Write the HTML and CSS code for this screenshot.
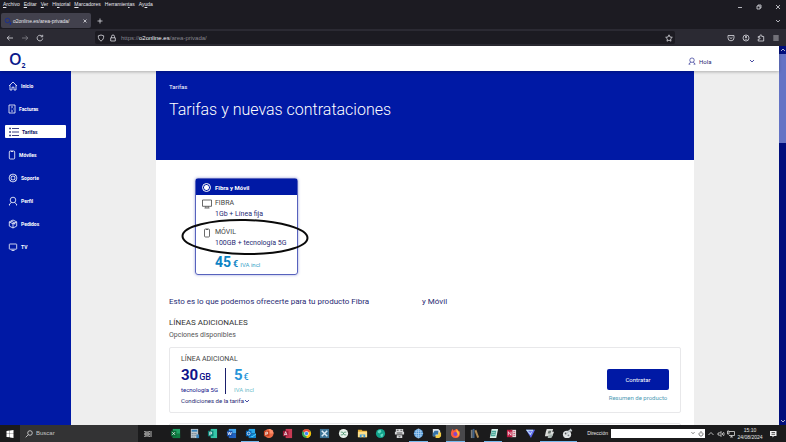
FILE: index.html
```html
<!DOCTYPE html>
<html lang="es">
<head>
<meta charset="utf-8">
<title>Tarifas y nuevas contrataciones</title>
<link rel="stylesheet" href="styles.css">
</head>
<body>
<header class="browser">
  <div class="menubar">
    <nav class="menus"><button><u>A</u>rchivo</button><button><u>E</u>ditar</button><button><u>V</u>er</button><button>Hi<u>s</u>torial</button><button><u>M</u>arcadores</button><button>Herramien<u>t</u>as</button><button>Ay<u>u</u>da</button></nav>
    <div class="window-buttons">
      <button aria-label="Minimizar"><svg viewBox="0 0 8 8"><path d="M2 4.500h4"/></svg></button>
      <button aria-label="Restaurar"><svg viewBox="0 0 8 8"><path d="M2 3h3v3H2zM3 3V2h3v3H5"/></svg></button>
      <button aria-label="Cerrar"><svg viewBox="0 0 8 8"><path d="M2 2l4 4M6 2L2 6"/></svg></button>
    </div>
  </div>
  <div class="tabbar">
    <div class="tab">
      <svg class="tab-logo" viewBox="0 0 8 8"><circle cx="3.500" cy="3.500" r="2.300"/><path d="M6 5.500h1v1H6v1h1"/></svg>
      <span>o2online.es/area-privada/</span>
      <button aria-label="Cerrar pestaña"><svg viewBox="0 0 8 8"><path d="M2.500 2.500l3 3M5.500 2.500l-3 3"/></svg></button>
    </div>
    <button class="new-tab" aria-label="Nueva pestaña"><svg viewBox="0 0 8 8"><path d="M4 1.500v5M1.500 4h5"/></svg></button>
    <button class="all-tabs" aria-label="Todas las pestañas"><svg viewBox="0 0 8 8"><path d="M2 3l2 2 2-2"/></svg></button>
  </div>
  <div class="navbar">
    <div class="nav-buttons">
      <button aria-label="Atrás"><svg viewBox="0 0 8 8"><path d="M7 4H1.200M3.500 1.700L1.200 4l2.300 2.300"/></svg></button>
      <button aria-label="Adelante" class="dim"><svg viewBox="0 0 8 8"><path d="M1 4h5.800M4.500 1.700L6.800 4 4.500 6.300"/></svg></button>
      <button aria-label="Recargar"><svg viewBox="0 0 8 8"><path d="M6.700 4.500A2.800 2.800 0 1 1 6 2.200M6.700 .8v2H4.700"/></svg></button>
    </div>
    <div class="address">
      <svg viewBox="0 0 8 8"><path d="M4 1l2.700.8c0 2.500-.7 4.200-2.700 5.300C2 6 1.300 4.300 1.300 1.800z"/></svg>
      <svg viewBox="0 0 8 8"><path d="M1.700 3.800h4.600v3.200H1.700zM2.500 3.800V2.500a1.500 1.500 0 0 1 3 0v1.300"/></svg>
      <span class="url">https://<b>o2online.es</b>/area-privada/</span>
      <svg viewBox="0 0 8 8"><path d="M4 .8l1 2.200 2.300.3-1.700 1.600.4 2.300-2-1.100-2 1.100.4-2.300L.7 3.300 3 3z"/></svg>
    </div>
    <div class="tools">
      <button aria-label="Pocket"><svg viewBox="0 0 8 8"><path d="M1 1.500h6v2.300a3 3 0 0 1-6 0zM2.500 3.200L4 4.600l1.500-1.400"/></svg></button>
      <button aria-label="Cuenta"><svg viewBox="0 0 8 8"><circle cx="4" cy="4" r="3"/><circle class="solid" cx="4" cy="3" r="1"/><path class="solid" d="M2.300 5.500a1.800 1.300 0 0 1 3.400 0z"/></svg></button>
      <button aria-label="Extensiones"><svg viewBox="0 0 8 8"><path d="M1.200 7V5.200h1a.7.700 0 0 0 0-1.600h-1V2.500H3V1.700a.9.900 0 0 1 1.800 0v.8h1.900V7z"/></svg></button>
      <button aria-label="Menú"><svg viewBox="0 0 8 8"><path d="M1.300 2h5.400M1.300 4h5.400M1.300 6h5.400"/></svg></button>
    </div>
  </div>
</header>

<div class="viewport">
  <div class="site">
    <header class="site-header">
      <a class="logo" href="#" aria-label="O2">O<sub>2</sub></a>
      <button class="account">
        <svg class="line-icon" viewBox="0 0 10 10"><circle cx="5" cy="4" r="2.800"/><path d="M1 9l2.400-2.800M9 9L6.600 6.200M1 9h2M7 9h2"/></svg>
        <span>Hola</span>
        <svg class="line-icon arrow" viewBox="0 0 6 6"><path d="M1 2l2 2 2-2"/></svg>
      </button>
    </header>
    <div class="site-body">
      <nav class="sidebar">
        <a href="#"><svg viewBox="0 0 10 10"><path d="M1 5l4-4 4 4M2 4.200V9h2V6.200h2V9h2V4.200"/></svg>Inicio</a>
        <a href="#" class="narrow"><svg viewBox="0 0 10 10"><path d="M2 1h6v8H2zM4 3h2M4 5h.5M6 5h.5M4 7h2"/></svg>Facturas</a>
        <a href="#" class="active"><svg viewBox="0 0 10 10"><path d="M3 1.500h7M3 5h7M3 8.500h7"/><path class="bullets" d="M.3 1.500h1.500M.3 5h1.500M.3 8.500h1.500"/></svg>Tarifas</a>
        <a href="#" class="narrow"><svg viewBox="0 0 10 10"><rect x="2.300" y="1" width="5.400" height="8" rx="1"/><path d="M4 1.500h2"/></svg>Móviles</a>
        <a href="#"><svg viewBox="0 0 10 10"><circle cx="5" cy="5" r="3.900"/><circle cx="5" cy="5" r="2"/><path d="M2.200 2.200l1.300 1.300M7.800 2.200L6.500 3.500M2.200 7.800l1.300-1.300M7.800 7.800L6.500 6.500"/></svg>Soporte</a>
        <a href="#"><svg viewBox="0 0 10 10"><circle cx="5" cy="4" r="2.800"/><path d="M1 9l2.400-2.800M9 9L6.600 6.200M1 9h1M8 9h1"/></svg>Perfil</a>
        <a href="#"><svg viewBox="0 0 10 10"><path d="M5 1l3.700 1.900v4.200L5 9 1.300 7.100V2.900zM1.300 2.900L5 4.800l3.700-1.900M5 4.800V9M3 2l3.800 2v1.500"/></svg>Pedidos</a>
        <a href="#"><svg viewBox="0 0 10 10"><rect x="1.300" y="2" width="7.400" height="5.200" rx=".6"/><path d="M3.500 8.500h3"/></svg>TV</a>
      </nav>
      <main class="content">
        <section class="banner">
          <p>Tarifas</p>
          <h1>Tarifas y nuevas contrataciones</h1>
        </section>
        <section class="current">
          <article class="plan">
            <label class="plan-title"><input type="radio" name="plan" checked>Fibra y Móvil</label>
            <dl>
              <dt><svg viewBox="0 0 10 10"><path d="M.5 1h9v6.300h-9zM3.800 7.300v1.500M6.200 7.300v1.500M2.500 9h5"/></svg>FIBRA</dt>
              <dd>1Gb + Línea fija</dd>
              <dt class="second"><svg viewBox="0 0 10 10"><rect x="2.500" y="1" width="5" height="8" rx="1"/><path d="M4 1.500h2"/></svg>MÓVIL</dt>
              <dd>100GB + tecnología 5G</dd>
            </dl>
            <p class="plan-price"><b>45</b><strong>€</strong><small>IVA incl</small></p>
            <svg class="marker" viewBox="0 0 130 38"><ellipse cx="65" cy="19" rx="62.500" ry="17" transform="rotate(1 65 19)"/></svg>
          </article>
        </section>
        <section class="offers">
          <h2><span>Esto es lo que podemos ofrecerte para tu producto Fibra</span><span>y Móvil</span></h2>
          <h3>LÍNEAS ADICIONALES</h3>
          <p class="hint">Opciones disponibles</p>
          <article class="offer">
            <div class="offer-info">
              <h4>LÍNEA ADICIONAL</h4>
              <div class="figures">
                <p class="data"><span><b>30</b><strong>GB</strong></span><small>tecnología 5G</small></p>
                <p class="price"><span><b>5</b><strong>€</strong></span><small>IVA incl</small></p>
              </div>
              <button class="conditions">Condiciones de la tarifa<svg class="line-icon" viewBox="0 0 6 6"><path d="M1 2l2 2 2-2"/></svg></button>
            </div>
            <div class="offer-actions">
              <button class="hire">Contratar</button>
              <a href="#">Resumen de producto</a>
            </div>
          </article>
          <article class="offer next"></article>
        </section>
      </main>
    </div>
  </div>
  <div class="scrollbar">
    <svg viewBox="0 0 8 8"><path d="M2 5l2-2 2 2"/></svg>
    <div class="thumb"></div>
    <svg class="down" viewBox="0 0 8 8"><path d="M2 3l2 2 2-2"/></svg>
  </div>
</div>

<footer class="taskbar">
  <button class="start" aria-label="Inicio"><svg viewBox="0 0 8 8"><path fill="#fff" d="M.5 1l3.200-.4v3.200H.5zM4 .6L7.500 0v3.800H4zM.5 4.100h3.200v3.200L.5 6.900zM4 4.100h3.500V8L4 7.400z"/></svg></button>
  <label class="search"><svg viewBox="0 0 8 8"><circle cx="5" cy="3" r="2.300"/><path d="M3.300 4.700L.7 7.300"/></svg><input type="text" placeholder="Buscar" aria-label="Buscar"></label>
  <button class="task-view" aria-label="Vista de tareas"><svg viewBox="0 0 8 8"><path d="M.8 1v1h4.500V1M.8 7V6h4.500v1M.8 3.200h4.500v1.600H.8zM7 1v6"/></svg></button>
  <div class="apps">
    <button aria-label="Excel"><svg viewBox="0 0 12 12"><path fill="#21a366" d="M3 1h8v10H3z"/><path fill="#107c41" d="M7 6h4v5H3V8z"/><path fill="#0b6b37" d="M1 3h6v6H1z"/><path stroke="#fff" d="M2.500 4.500l3 3M5.500 4.500l-3 3"/></svg></button>
    <button aria-label="Calculadora"><svg viewBox="0 0 12 12"><path fill="#b9c4cb" d="M2 1h8v10H2z"/><path fill="#3684bd" d="M3 2h6v2H3z"/><path stroke="#456" stroke-dasharray="1 1" d="M3 6h6M3 8h6M3 10h4"/><path fill="#3684bd" d="M8 7h3v4H8z"/></svg></button>
    <button aria-label="Publisher"><svg viewBox="0 0 12 12"><path fill="#36c5a8" d="M4 1h7v10H4z"/><path fill="#0b8074" d="M1 3h6v6H1z"/><path stroke="#fff" fill="none" d="M3 8V4.500h2v2H3"/></svg></button>
    <button aria-label="Word"><svg viewBox="0 0 12 12"><path fill="#41a5ee" d="M3 1h8v5H3z"/><path fill="#2262c2" d="M3 6h8v5H3z"/><path fill="#174da8" d="M1 3h6v6H1z"/><path stroke="#fff" fill="none" stroke-width=".8" d="M2 4.500l1 3 1-3 1 3 1-3"/></svg></button>
    <button class="open" aria-label="Outlook"><svg viewBox="0 0 12 12"><path fill="#28a8ea" d="M4 1h7v5H4z"/><path fill="#1483cf" d="M4 6h8v5H4z"/><path fill="#50d9ff" d="M4 7l4 2 4-3v1L8 10 4 8z"/><path fill="#0364b8" d="M1 3h6v6H1z"/><circle cx="4" cy="6" r="1.600" fill="none" stroke="#fff"/></svg></button>
    <button aria-label="PowerPoint"><svg viewBox="0 0 12 12"><circle cx="6.500" cy="6" r="5" fill="#ed6c47"/><path fill="#ff8f6b" d="M6.500 1a5 5 0 0 1 5 5h-5z"/><path fill="#c43e1c" d="M1 3h6v6H1z"/><path stroke="#fff" fill="none" d="M3 8V4.500h2v2H3"/></svg></button>
    <button aria-label="Access"><svg viewBox="0 0 12 12"><path fill="#c73a54" d="M4 1h7v10H4z"/><path fill="#9a1633" d="M1 3h6v6H1z"/><path stroke="#fff" fill="none" stroke-width=".8" d="M2.500 8L4 4l1.500 4M3 7h2"/></svg></button>
    <button aria-label="Chrome"><svg viewBox="0 0 12 12"><circle cx="6" cy="6" r="5" fill="#34a853"/><path fill="#ea4335" d="M1.700 3.500a5 5 0 0 1 8.600 0L6 6z"/><path fill="#fbbc05" d="M10.300 3.500A5 5 0 0 1 6 11l0-5z"/><circle cx="6" cy="6" r="2.500" fill="#fff"/><circle cx="6" cy="6" r="1.900" fill="#4285f4"/></svg></button>
    <button aria-label="Herramientas"><svg viewBox="0 0 12 12"><path fill="#3d7396" d="M1 1h10v10H1z"/><path stroke="#dcebf5" stroke-width="1.600" d="M3 3l6 6M9 3L3 9"/></svg></button>
    <button aria-label="Utilidad"><svg viewBox="0 0 12 12"><circle cx="6" cy="6" r="5" fill="#e9f2ec"/><path stroke="#34865d" fill="none" d="M3 4.500h2l2 3h2M3 7.500h2l2-3h2"/></svg></button>
    <button aria-label="Archivos"><svg viewBox="0 0 12 12"><path fill="#e6ac32" d="M1 2h4l1 1h5v7H1z"/><path fill="#ffe08a" d="M1 4h10v6H1z"/><path fill="#3e9bdc" d="M3 7h6v3H7V8H5v2H3z"/></svg></button>
    <button aria-label="Agente"><svg viewBox="0 0 12 12"><circle cx="6" cy="6" r="5" fill="#12a38c"/><path fill="#65dbc4" d="M3 3l3-1 1 2-2 2-2-1zM6 7l3-1-1 4-2-1z"/></svg></button>
    <button aria-label="Impresora"><svg viewBox="0 0 12 12"><path fill="#d5d7d9" d="M2 1h8v3H2zM1 4h10v3H1zM3 8h6v3H3z"/><path fill="#555" d="M3 2h2v1H3zM7 2h2v1H7zM3 5h6v1H3zM5 9h2v1H5z"/></svg></button>
    <button class="open" aria-label="Navegador"><svg viewBox="0 0 12 12"><circle cx="6" cy="6" r="5" fill="#4f96d5"/><path stroke="#b9daf5" fill="none" stroke-width=".7" d="M6 1v10M1 6h10M2 3.500h8M2 8.500h8"/><ellipse cx="6" cy="6" rx="2.500" ry="5" fill="none" stroke="#b9daf5" stroke-width=".7"/></svg></button>
    <button aria-label="Python"><svg viewBox="0 0 12 12"><path fill="#dce2e6" d="M2 1h6l2 2v6H2z"/><path fill="#3572a5" d="M4 3h4v4H5v2H2V6z"/><path fill="#f2cc43" d="M8 5h3v4L9 11H5V8h3z"/></svg></button>
    <button class="open current-app" aria-label="Firefox"><svg viewBox="0 0 12 12"><path fill="#ff5a3c" d="M1 6c0-2 1-4 2-5l1 2c2-2 3-2 4-2 0 1 1 1 2 3l.5-1C12 9 9 11 6 11S1 9 1 6z"/><path fill="#ffbd35" d="M7 1c1 2 3 2 3 5 0 2-1 4-4 4 3-1 3-3 1-5z"/><circle cx="5.800" cy="6.500" r="2.200" fill="#8746c9"/></svg></button>
    <button aria-label="Biblioteca"><svg viewBox="0 0 12 12"><path fill="#7c7e80" d="M2 2h2v9H2z"/><path fill="#3f6189" d="M4 1h2v10H4z"/><path fill="#b18c55" d="M6 3l2-1 3 8-2 1z"/></svg></button>
    <button class="open" aria-label="Notas"><svg viewBox="0 0 12 12"><path fill="#d9f0ea" d="M4 1h7L9 11H2z"/><path fill="#48a899" d="M4 3h5L8 9H3z"/><path stroke="#d9f0ea" stroke-width=".6" d="M4 5h4M4 7h4"/></svg></button>
    <button aria-label="Lector"><svg viewBox="0 0 12 12"><path fill="#e7d9dc" d="M5 2h6v8H5z"/><path fill="#bb1940" d="M1 2h6v8H1z"/><path stroke="#fff" fill="none" d="M2.500 8V4l3 4V4"/><path stroke="#bb1940" stroke-width=".7" d="M8 4h2M8 6h2M8 8h2"/></svg></button>
    <button aria-label="VPN"><svg viewBox="0 0 12 12"><path fill="#5c67ee" d="M1 2h10L6.500 11z"/><path fill="#c4eaf5" d="M1 2h8L6 8z"/><path fill="#7776f5" d="M3 3h5L6 6z"/></svg></button>
    <button class="open" aria-label="Fax"><svg viewBox="0 0 12 12"><path fill="#dadcda" d="M3 1h7l-1 3h2L9 9H1l1-5z"/><path fill="#65706b" d="M5 3h3L7 6H4z"/><path fill="#a8b5af" d="M5 7h5l-2 4H4z"/></svg></button>
    <button class="open" aria-label="Pintura"><svg viewBox="0 0 12 12"><ellipse cx="5.500" cy="7" rx="4.500" ry="4" fill="#dfe2e3"/><circle cx="4" cy="6" r="1" fill="#505456"/><circle cx="7" cy="8" r="1" fill="#7b8388"/><path stroke="#bfc5c8" stroke-width="1.500" d="M5 6l5-5M7 3h4"/></svg></button>
  </div>
  <div class="direction">
    <label for="direction">Dirección</label>
    <div class="direction-box">
      <select id="direction"><option></option></select>
      <svg viewBox="0 0 8 8"><path d="M2.500 3.200L4 4.700l1.500-1.500"/></svg>
    </div>
  </div>
  <button class="go" aria-label="Actualizar"><svg viewBox="0 0 8 8"><path d="M5.200 2.500A2 2 0 1 1 2.800 2.500M4 1v2.500"/></svg></button>
  <div class="tray">
    <svg viewBox="0 0 8 8"><path d="M1.500 5L4 2.500 6.500 5"/></svg>
    <svg viewBox="0 0 8 8"><path d="M1 3h1.500L4 1.500v5L2.500 5H1zM5.300 3q.7 1 0 2M6.500 2q1.300 2 0 4"/></svg>
    <svg viewBox="0 0 8 8"><path d="M2 1.500h5.500v4H2M4.500 5.500V7M3 7h3M.5 1h1.500v3H.5z"/></svg>
  </div>
  <div class="clock"><time>15:10</time><time>24/08/2024</time></div>
  <button class="notices" aria-label="Notificaciones"><svg viewBox="0 0 8 8"><path fill="#eee" d="M1 1h6.500v5H5L3.500 7.500V6H1z"/><path d="M2.500 2.500h3.500M2.500 4.300h3.500" stroke="#333"/></svg></button>
</footer>
</body>
</html>
```
FILE: styles.css
```css
* { box-sizing: border-box; }
html, body { height: 100%; }
body {
  margin: 0;
  display: flex;
  flex-direction: column;
  overflow: hidden;
  font-family: Roboto, "Liberation Sans", sans-serif;
  color: #1f2a73;
}
h1, h2, h3, h4, p, dl, dd { margin: 0; font-weight: 400; }
button { margin: 0; padding: 0; border: 0; background: none; color: inherit; font: inherit; }
a { color: inherit; text-decoration: none; }
svg { display: block; flex: none; width: 8px; height: 8px; }

/* Browser window */
.browser { flex: none; background: #1c1b22; color: #e8e8ee; font: 5px/8px "Liberation Sans", sans-serif; }
.browser svg, .scrollbar svg { fill: none; stroke: #dcdce2; stroke-width: 0.8; }
.browser .solid { fill: #dcdce2; stroke: none; }
.menubar { display: flex; justify-content: space-between; height: 12px; }
.menus { display: flex; align-items: flex-start; gap: 4px; padding-left: 3px; }
.menus button { height: 8px; }
.window-buttons { display: flex; gap: 11px; padding: 2px 4px 0 0; }
.tabbar { display: flex; align-items: center; height: 17px; padding: 0 4px 0 1px; }
.tab { display: flex; align-items: center; gap: 1px; width: 90px; height: 15px; padding: 0 2px 0 3px; border-radius: 2px; background: #42414d; }
.tab span { flex: 1; white-space: nowrap; }
.browser .tab-logo { stroke: #1b2f8e; stroke-width: 1; }
.new-tab { margin-left: 5px; }
.all-tabs { margin-left: auto; }
.navbar { display: flex; align-items: center; height: 17px; padding: 0 6px; background: #2b2a33; }
.nav-buttons { display: flex; gap: 7px; width: 89px; }
.dim { opacity: 0.5; }
.address { flex: 1; display: flex; align-items: center; gap: 4px; height: 13px; padding: 0 2px; border-radius: 2px; background: #1c1b22; }
.url { flex: 1; color: #85848e; font-size: 6px; }
.url b { color: #f4f4f8; font-weight: 400; }
.tools { display: flex; gap: 7px; padding-left: 52px; }

/* Site */
.viewport { flex: 1; min-height: 0; display: flex; }
.site { flex: 1; min-width: 0; display: flex; flex-direction: column; }
.site-header { position: relative; flex: none; display: flex; align-items: center; justify-content: space-between; height: 25px; padding: 0 24px 0 9px; background: #fff; box-shadow: 0 1px 3px #0004; }
.logo { color: #0b1a8c; font: 600 16px/20px "Open Sans", sans-serif; }
.logo sub { font-size: 7px; line-height: 7px; font-weight: 700; vertical-align: -3px; }
.line-icon { fill: none; stroke: #1a1f8b; stroke-width: 0.8; }
.account { display: flex; align-items: center; gap: 3px; width: 67px; margin-top: 5px; font-size: 6px; }
.arrow { width: 6px; height: 6px; margin-left: auto; }
.site-body { flex: 1; min-height: 0; display: flex; background: #eee; }
.sidebar { flex: none; display: flex; flex-direction: column; gap: 10px; width: 71px; padding: 8px 5px; background: #0019a5; color: #fff; font-size: 5px; font-weight: 700; }
.sidebar a { display: flex; align-items: center; gap: 3px; height: 13px; padding-left: 3px; border-radius: 1px; }
.sidebar svg { width: 10px; height: 10px; fill: none; stroke: currentColor; stroke-width: 0.8; }
.sidebar .narrow { gap: 2px; padding-left: 2px; }
.sidebar .active { background: #fff; color: #0b1263; padding-left: 4px; }
.sidebar .bullets { stroke-width: 1.5; }
.content { flex: 1; min-width: 0; margin: 0 85px; overflow: hidden; background: #fff; }
.banner { height: 89px; padding: 11px 13px; background: #0019a5; color: #fff; }
.banner p { font-size: 6px; line-height: 9px; }
.banner h1 { padding-top: 9px; font-size: 16px; line-height: 20px; font-weight: 300; }
.current { padding: 18px 39px 0; }
.plan { position: relative; width: 103px; height: 97px; border: 1px solid #5762bd; border-radius: 3px; box-shadow: 0 0 3px #0019a566; }
.plan-title { display: flex; align-items: center; gap: 4px; height: 16px; padding-left: 6px; background: #0019a5; color: #fff; font-size: 6px; font-weight: 700; }
.plan-title input { appearance: none; width: 9px; height: 9px; margin: 0; border: 1px solid #fff; border-radius: 50%; background: radial-gradient(#fff 0 2px, transparent 3px); }
.plan dt { display: flex; align-items: center; gap: 3px; padding: 3px 0 0 6px; color: #444; font-size: 7px; line-height: 11px; }
.plan dt svg { width: 10px; height: 10px; fill: none; stroke: #444; stroke-width: 0.8; }
.plan dd { padding-left: 19px; font-size: 7px; line-height: 11px; white-space: nowrap; }
.plan .second { padding-top: 7px; }
.plan-price { display: flex; align-items: baseline; gap: 2px; padding: 5px 0 0 19px; color: #0d83c4; line-height: 16px; }
.plan-price b { font-size: 14px; }
.plan-price strong { font-size: 9px; }
.plan-price small { color: #36a3c9; font-size: 6px; }
/* Hand-drawn ring over the mobile line */
.marker { position: absolute; left: -16px; top: 39px; width: 130px; height: 38px; fill: none; stroke: #0a0a0a; stroke-width: 2; }
.offers { padding: 21px 13px 0; }
.offers h2 { display: flex; gap: 53px; font-size: 8px; line-height: 12px; }
.offers h3 { padding-top: 9px; color: #333; font-size: 8px; line-height: 12px; }
.hint { color: #555; font-size: 7px; line-height: 13px; }
.offer { display: flex; justify-content: space-between; height: 66px; margin-top: 5px; padding: 7px 11px; border: 1px solid #e8e8ea; border-radius: 2px; }
.offer.next { margin-top: 10px; }
.offer h4 { color: #444; font-size: 7px; line-height: 9px; }
.figures { display: flex; padding-top: 4px; }
.figures p { display: flex; flex-direction: column; }
.figures span { display: flex; align-items: baseline; gap: 1px; line-height: 15px; }
.figures b { font-size: 15px; }
.figures strong { font-size: 9px; font-weight: 500; }
.figures small { font-size: 6px; line-height: 9px; }
.data { width: 44px; color: #0f138a; }
.price { padding-left: 8px; border-left: 1px solid #1a1f6b; color: #2795d9; }
.price small { color: #6bbdca; }
.conditions { display: flex; align-items: center; padding-top: 2px; font-size: 6px; line-height: 9px; }
.conditions svg { width: 6px; height: 6px; }
.offer-actions { display: flex; flex-direction: column; align-items: center; padding-top: 14px; }
.hire { width: 62px; height: 21px; border-radius: 2px; background: #0019a5; color: #fff; font-size: 6px; }
.offer-actions a { padding-top: 3px; color: #4f9bb5; font-size: 6px; line-height: 9px; }
.scrollbar { flex: none; display: flex; flex-direction: column; align-items: center; width: 7px; background: #000e7c; }
.thumb { width: 7px; height: 89px; background: #6473c5; }
.scrollbar .down { margin-top: auto; }

/* Taskbar */
.taskbar { flex: none; display: flex; align-items: center; height: 17px; background: #1b1b1c; color: #e5e5e5; font: 5px/7px "Liberation Sans", sans-serif; }
.taskbar svg { stroke-width: 0.8; }
.start { width: 20px; padding-left: 6px; }
.search { display: flex; align-items: center; gap: 3px; width: 118px; height: 17px; padding-left: 5px; background: #333334; }
.search svg, .task-view svg, .tray svg { fill: none; stroke: #ddd; }
.search input { width: 80px; padding: 0; border: 0; background: none; color: #ccc; font: 6px/9px "Liberation Sans", sans-serif; }
.search input::placeholder { color: #c4c4c4; }
.task-view { width: 28px; padding-left: 6px; }
.apps { flex: 1; display: grid; grid-template-columns: repeat(22, 1fr); height: 17px; }
.apps button { display: flex; align-items: center; justify-content: center; border-bottom: 1px solid transparent; }
.apps svg { width: 11px; height: 11px; }
.apps .open { border-color: #76b9ed; }
.apps .current-app { background: #48484b; }
.direction { display: flex; align-items: center; gap: 3px; padding-left: 10px; }
.direction-box { display: flex; background: #fff; }
.direction select { appearance: none; width: 78px; height: 9px; padding: 0; border: 0; border-radius: 0; background: #fff; }
.direction svg, .go svg { fill: none; stroke: #555; }
.go { height: 9px; background: #fff; }
.tray { display: flex; gap: 2px; padding-left: 2px; }
.clock { display: flex; flex-direction: column; align-items: center; width: 30px; line-height: 7px; }
.notices { width: 21px; padding-left: 4px; }
```
